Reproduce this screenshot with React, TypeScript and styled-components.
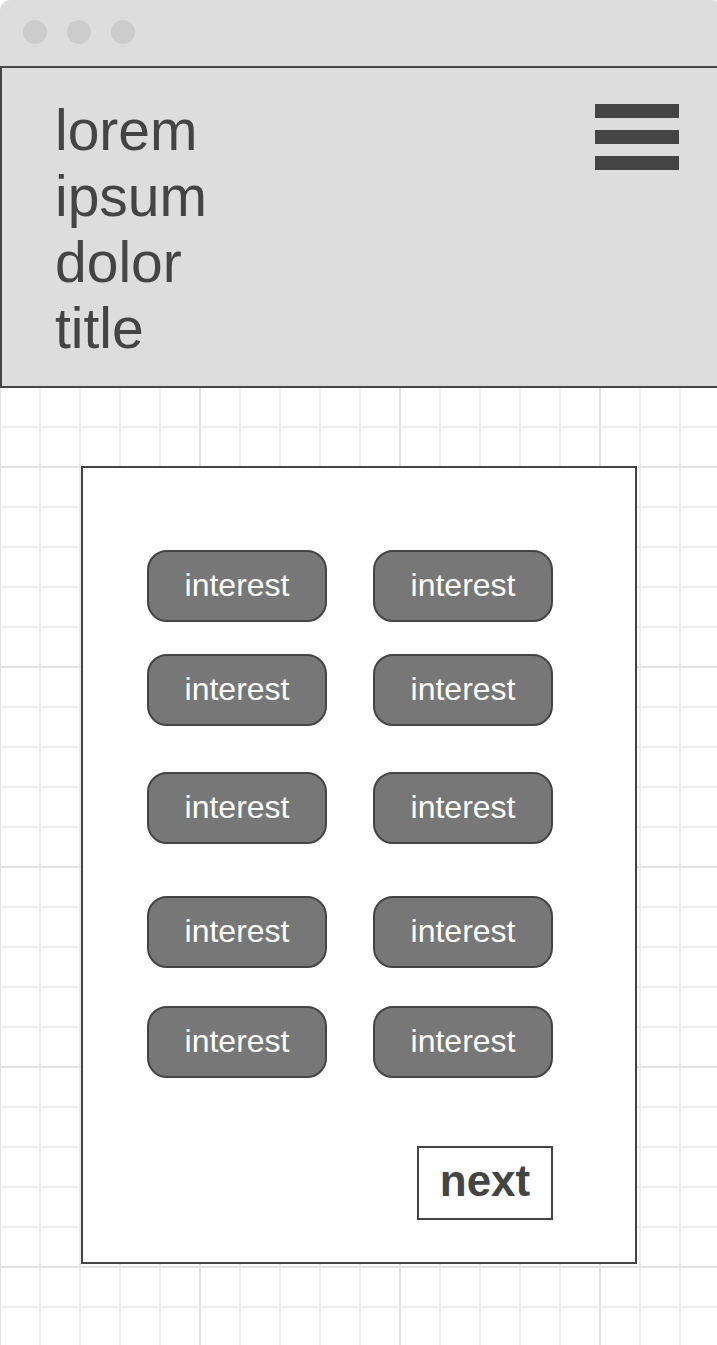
import React from "react";
import styled, { createGlobalStyle } from "styled-components";

const GlobalStyle = createGlobalStyle`
  html, body {
    margin: 0;
    padding: 0;
    background: #ffffff;
    font-family: "Liberation Sans", Arial, sans-serif;
  }
  * { box-sizing: border-box; }
`;

const Page = styled.div`
  width: 717px;
  display: flex;
  flex-direction: column;
  overflow: hidden;
`;

const TitleBar = styled.div`
  height: 68px;
  background: #dddddd;
  border-bottom: 2px solid #444444;
  border-radius: 10px 4px 0 0;
  display: flex;
  align-items: flex-start;
  gap: 20px;
  padding: 20px 0 0 23px;
`;

const Dot = styled.span`
  width: 24px;
  height: 24px;
  border-radius: 50%;
  background: #cccccc;
`;

const Header = styled.header`
  height: 320px;
  background: #dddddd;
  border-left: 2px solid #444444;
  border-bottom: 2px solid #444444;
  display: flex;
  justify-content: space-between;
  align-items: flex-start;
  padding: 29px 38px 0 53px;
`;

const Title = styled.h1`
  margin: 0;
  font-family: "Liberation Sans", Arial, sans-serif;
  font-weight: 400;
  font-size: 57px;
  line-height: 66px;
  color: #444444;
`;

const Burger = styled.div`
  margin-top: 7px;
  display: flex;
  flex-direction: column;
  gap: 12px;
`;

const BurgerBar = styled.span`
  display: block;
  width: 84px;
  height: 14px;
  background: #444444;
`;

const Canvas = styled.main`
  height: 957px;
  padding: 78px 0 0 81px;
  background-color: #ffffff;
  background-image:
    linear-gradient(to right, #e3e3e3 0 2px, transparent 2px),
    linear-gradient(to bottom, #e3e3e3 0 2px, transparent 2px),
    linear-gradient(to right, #eeeeee 0 2px, transparent 2px),
    linear-gradient(to bottom, #eeeeee 0 2px, transparent 2px);
  background-size: 200px 200px, 200px 200px, 40px 40px, 40px 40px;
  background-position: 199px 0, 0 78px, 39px 0, 0 38px;
`;

const Card = styled.section`
  width: 556px;
  height: 798px;
  background: #ffffff;
  border: 2px solid #444444;
  padding: 82px 0 0 64px;
  display: flex;
  flex-direction: column;
`;

const PillRow = styled.div<{ $top: number }>`
  display: grid;
  grid-template-columns: 180px 180px;
  column-gap: 46px;
  margin-top: ${(p) => p.$top}px;
`;

const Pill = styled.button`
  height: 72px;
  border: 2px solid #444444;
  border-radius: 20px;
  background: #777777;
  color: #ffffff;
  font-family: "Liberation Sans", Arial, sans-serif;
  font-size: 32px;
  line-height: 1;
  padding: 0 0 2px;
  display: flex;
  align-items: center;
  justify-content: center;
`;

const Footer = styled.div`
  width: 406px;
  margin-top: 68px;
  display: flex;
  justify-content: flex-end;
`;

const NextButton = styled.button`
  width: 136px;
  height: 74px;
  border: 2px solid #444444;
  background: #ffffff;
  color: #444444;
  font-family: "Liberation Sans", Arial, sans-serif;
  font-weight: 700;
  font-size: 44px;
  line-height: 1;
  padding: 0 0 4px;
  display: flex;
  align-items: center;
  justify-content: center;
`;

const rowOffsets = [0, 32, 46, 52, 38];

export default function App() {
  return (
    <>
      <GlobalStyle />
      <Page>
        <TitleBar>
          <Dot />
          <Dot />
          <Dot />
        </TitleBar>
        <Header>
          <Title>
            lorem
            <br />
            ipsum
            <br />
            dolor
            <br />
            title
          </Title>
          <Burger>
            <BurgerBar />
            <BurgerBar />
            <BurgerBar />
          </Burger>
        </Header>
        <Canvas>
          <Card>
            {rowOffsets.map((top, i) => (
              <PillRow key={i} $top={top}>
                <Pill>interest</Pill>
                <Pill>interest</Pill>
              </PillRow>
            ))}
            <Footer>
              <NextButton>next</NextButton>
            </Footer>
          </Card>
        </Canvas>
      </Page>
    </>
  );
}
